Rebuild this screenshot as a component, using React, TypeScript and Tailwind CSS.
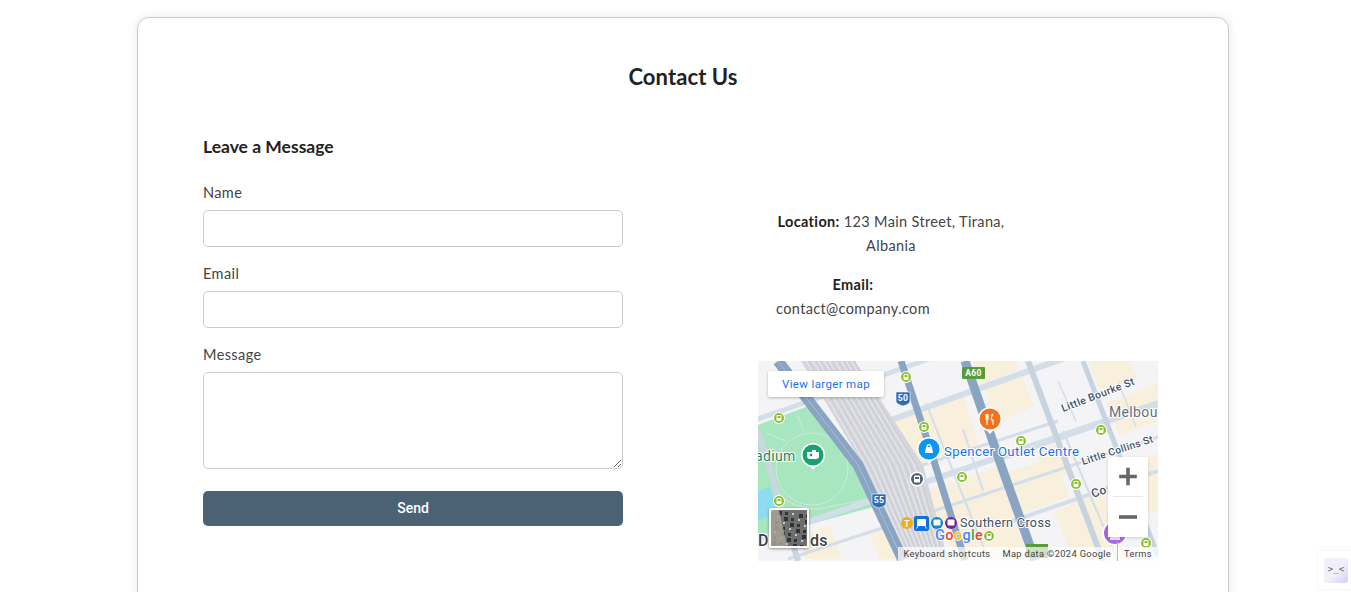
import React from 'react';

const labelFont = { fontFamily: 'Roboto, sans-serif' };

const TransitDot = ({ x, y }: { x: number; y: number }) => (
  <g transform={`translate(${x} ${y})`}>
    <circle r="6" fill="#fff" />
    <circle r="5" fill="#8bc02f" />
    <rect x="-2.5" y="-3" width="5" height="6" rx="1" fill="#fff" />
    <rect x="-1.5" y="-2" width="3" height="2" fill="#8bc02f" />
  </g>
);

const RouteBadge = ({ x, y, label }: { x: number; y: number; label: string }) => (
  <g transform={`translate(${x} ${y})`}>
    <path d="M-7 -6 H7 V3 Q7 6 0 8 Q-7 6 -7 3 Z" fill="#2f6cb5" stroke="#fff" strokeWidth="0.6" />
    <text y="3" textAnchor="middle" fontSize="8.5" fontWeight="700" fill="#fff" style={labelFont}>{label}</text>
  </g>
);

const Pin = ({ x, y, color, children }: { x: number; y: number; color: string; children?: React.ReactNode }) => (
  <g transform={`translate(${x} ${y})`}>
    <path d="M-9 5 L0 15 L9 5 Z" fill="#fff" />
    <circle r="12" fill="#fff" />
    <circle r="10.5" fill={color} />
    {children}
  </g>
);

const railLines = [48, 55, 60, 66, 71, 77, 83, 88, 93];

const MapArt = () => (
  <svg viewBox="0 0 400 200" width="400" height="200" className="block">
    <rect width="400" height="200" fill="#f4f3f5" />
    {/* city blocks */}
    <g fill="#f8f0dc">
      <polygon points="126,62 205,34 222,86 150,112" />
      <polygon points="168,130 240,106 270,198 198,198" />
      <polygon points="225,25 262,10 276,45 240,62" />
      <polygon points="278,90 300,82 312,112 290,120" />
      <polygon points="296,150 345,132 368,198 316,198" />
      <polygon points="248,112 296,96 312,136 264,152" />
      <polygon points="348,42 400,22 400,60 362,74" />
      <polygon points="362,104 400,92 400,150 380,156" />
      <polygon points="40,175 72,165 84,198 48,198" />
      <polygon points="110,170 142,160 155,198 122,198" />
      <polygon points="215,0 260,0 258,10 222,24" />
      <polygon points="330,0 372,0 380,18 342,30" />
    </g>
    <polygon points="0,64 53,44 100,104 115,146 20,172 0,178" fill="#a8e6bf" />
    <polygon points="0,130 12,126 20,150 0,160" fill="#8fdcf0" />
    <g fill="none" stroke="#cfe9d8" strokeWidth="1">
      <circle cx="54" cy="108" r="36" />
      <path d="M8 72 L28 80 M40 55 L46 72 M15 130 Q40 150 60 148 L110 138" />
    </g>
    {/* street grid */}
    <g fill="none" stroke="#d3dee8">
      <path d="M0 58 L120 16 M120 16 L215 -18" strokeWidth="5" />
      <path d="M130 60 L400 -36" strokeWidth="6" />
      <path d="M0 178 L400 42" strokeWidth="6" />
      <path d="M30 198 L400 76" strokeWidth="3" />
      <path d="M115 120 L300 60" strokeWidth="3" />
      <path d="M240 165 L400 110" strokeWidth="4" />
      <path d="M240 100 L400 45" strokeWidth="2" />
      <path d="M270 0 L345 200" strokeWidth="6" stroke="#c7d3de" />
      <path d="M325 0 L400 195" strokeWidth="5" stroke="#c7d3de" />
      <path d="M0 70 L40 200" strokeWidth="6" stroke="#cad6e0" />
      <path d="M205 68 L225 130" strokeWidth="2" />
      <path d="M168 42 L230 198" strokeWidth="2" />
      <path d="M305 70 L360 200" strokeWidth="2" />
      <path d="M300 20 L318 60 M360 20 L378 66" strokeWidth="1.5" />
    </g>
    {/* rail yards */}
    <polygon points="43,0 97,0 165,104 190,199 150,199 105,104" fill="#d6d7dc" />
    <g fill="none" stroke="#f4f4f6" strokeWidth="0.7">
      {railLines.map((x, i) => (
        <path key={x} d={`M${x} 0 L${108 + i * 6} 104 L${152 + i * 4} 199`} />
      ))}
    </g>
    <g fill="none" stroke="#bfc1c8" strokeWidth="0.5">
      {railLines.map((x, i) => (
        <path key={x} d={`M${x + 3} 0 L${111 + i * 6} 104 L${154 + i * 4} 199`} />
      ))}
    </g>
    {/* freeways */}
    <g fill="none" stroke="#8aa5c4" strokeLinejoin="round">
      <path d="M20 0 L100 104 L145 199" strokeWidth="11" />
      <path d="M143 0 L170 81 L207 199" strokeWidth="7" />
      <path d="M207 0 L243 104 L277 199" strokeWidth="9" />
    </g>
    <path d="M20 0 L100 104 L145 199" fill="none" stroke="#a9bdd4" strokeWidth="1" />
    <TransitDot x={148} y={16} />
    <TransitDot x={21} y={57} />
    <TransitDot x={166} y={66} />
    <TransitDot x={263} y={80} />
    <TransitDot x={343} y={69} />
    <TransitDot x={204} y={116} />
    <TransitDot x={318} y={123} />
    <TransitDot x={21} y={140} />
    <TransitDot x={231} y={175} />
    <TransitDot x={388} y={182} />
    <RouteBadge x={145} y={37} label="50" />
    <RouteBadge x={121} y={139} label="55" />
    <rect x="204" y="6" width="23" height="12" rx="1" fill="#5c9a3e" />
    <text x="215.5" y="15" textAnchor="middle" fontSize="8.5" fontWeight="700" fill="#fff" style={labelFont}>A60</text>
    <rect x="268" y="183" width="22" height="14" fill="#5c9a3e" />
    <Pin x={55} y={94} color="#17a26f">
      <path d="M-6 -3 H-1 V-5 H3 V-3 H6 V1 Q6 4 3 4 H-3 Q-6 4 -6 1 Z" fill="#fff" />
      <circle cx="-2" cy="0" r="1.4" fill="#17a26f" />
    </Pin>
    <Pin x={171} y={88} color="#0b96f2">
      <path d="M-4 4 L-3 -2 H3 L4 4 Z" fill="#fff" />
      <path d="M-2 -2 A2 2.4 0 0 1 2 -2" fill="none" stroke="#fff" strokeWidth="1.2" />
    </Pin>
    <Pin x={232} y={58} color="#f4711c">
      <path d="M-4 -5 V-1 Q-4 1 -3 1 V6 M-3 -5 V-1 M-2 -5 V-1 Q-2 1 -3 1 M3 -5 Q1 -3 1.5 1 H3 V6" fill="none" stroke="#fff" strokeWidth="1.2" />
    </Pin>
    <circle cx="357" cy="172" r="13" fill="#fff" />
    <circle cx="357" cy="172" r="11" fill="#a966e8" />
    <rect x="352" y="172" width="10" height="7" fill="#fff" opacity="0.8" />
    <circle cx="159" cy="118" r="7.5" fill="#fff" />
    <circle cx="159" cy="118" r="6" fill="#51667d" />
    <rect x="156" y="114.5" width="6" height="7" rx="1" fill="#fff" />
    <rect x="157" y="116" width="4" height="2" fill="#51667d" />
    {/* station icons */}
    <circle cx="149" cy="162" r="6" fill="#f5ac0f" />
    <text x="149" y="165.5" textAnchor="middle" fontSize="9" fontWeight="700" fill="#fff" style={labelFont}>T</text>
    <rect x="156" y="155" width="15" height="15" rx="2" fill="#0f72d8" />
    <rect x="159" y="158" width="9" height="7" rx="1" fill="#fff" />
    <path d="M160 165 L158.5 167.5 M167 165 L168.5 167.5" stroke="#fff" strokeWidth="1" />
    <circle cx="179" cy="162" r="6" fill="#1382c8" />
    <rect x="175.5" y="158.5" width="7" height="6" rx="1" fill="#fff" />
    <circle cx="193" cy="162" r="6" fill="#7c2290" />
    <rect x="189.5" y="158.5" width="7" height="6" rx="1" fill="#fff" />
    <g style={labelFont}>
      <text x="-3" y="100" fontSize="14" fill="#128a6a" stroke="#fff" strokeWidth="2" paintOrder="stroke">adium</text>
      <text x="186" y="95" fontSize="13.2" fill="#1a73e8" stroke="#fff" strokeWidth="2" paintOrder="stroke">Spencer Outlet Centre</text>
      <text x="202" y="166" fontSize="12.6" fill="#3c4f66" stroke="#fff" strokeWidth="2" paintOrder="stroke">Southern Cross</text>
      <text x="0" y="185" fontSize="16" fontWeight="500" fill="#3c4043" stroke="#fff" strokeWidth="2" paintOrder="stroke">Do</text>
      <text x="52" y="185" fontSize="16" fontWeight="500" fill="#3c4043" stroke="#fff" strokeWidth="2" paintOrder="stroke">ds</text>
      <text x="351" y="56" fontSize="14" fill="#5f6f7f" stroke="#fff" strokeWidth="2" paintOrder="stroke">Melbour</text>
      <text transform="translate(305 51) rotate(-21)" fontSize="10.5" fontWeight="500" fill="#3f5268" stroke="#fff" strokeWidth="2" paintOrder="stroke">Little Bourke St</text>
      <text transform="translate(325 104) rotate(-18)" fontSize="10.2" fontWeight="500" fill="#3f5268" stroke="#fff" strokeWidth="2" paintOrder="stroke">Little Collins St</text>
      <text transform="translate(335 137) rotate(-20)" fontSize="12" fontWeight="500" fill="#3f5268" stroke="#fff" strokeWidth="2" paintOrder="stroke">Co</text>
      <text x="177" y="179" fontSize="14.5" fontWeight="500" stroke="#fff" strokeWidth="1.5" paintOrder="stroke">
        <tspan fill="#4285f4">G</tspan>
        <tspan fill="#ea4335">o</tspan>
        <tspan fill="#fbbc05">o</tspan>
        <tspan fill="#4285f4">g</tspan>
        <tspan fill="#34a853">l</tspan>
        <tspan fill="#ea4335">e</tspan>
      </text>
    </g>
  </svg>
);

// satellite thumbnail, speckled so it reads as aerial imagery
const speckles = Array.from({ length: 70 }, (_, i) => ({
  x: (i * 17) % 36,
  y: (i * 23) % 36,
  w: 2 + (i % 3),
  dark: i % 3 !== 0,
}));

const Thumb = () => (
  <svg viewBox="0 0 36 36" width="36" height="36" className="block">
    <rect width="36" height="36" fill="#6d6f6e" />
    {speckles.map((s, i) => (
      <rect key={i} x={s.x} y={s.y} width={s.w} height={s.w} fill={s.dark ? '#2f3439' : '#c9c9c6'} />
    ))}
    <polygon points="0,0 8,0 16,36 0,36" fill="#a8a398" opacity="0.85" />
  </svg>
);

const GoogleMap = () => (
  <div className="relative w-[400px] h-[200px] overflow-hidden" style={labelFont}>
    <MapArt />
    <a className="absolute left-[10px] top-[10px] w-[116px] h-[26px] flex items-center justify-center bg-white rounded-[2px] shadow-[0_1px_3px_rgba(0,0,0,0.25)] text-[11.5px] text-[#1a73e8]">
      View larger map
    </a>
    <div className="absolute left-[11px] top-[147px] border-2 border-white rounded-[2px] shadow-[0_1px_3px_rgba(0,0,0,0.4)]">
      <Thumb />
    </div>
    <div className="absolute left-[350px] top-[96px] w-[40px] h-[80px] bg-white flex flex-col items-center shadow-[0_1px_3px_rgba(0,0,0,0.15)]">
      <svg viewBox="0 0 40 40" width="40" height="39" className="block">
        <path d="M11 20 H29 M20 11 V29" stroke="#666" strokeWidth="3.6" />
      </svg>
      <div className="w-[30px] h-px bg-[#e6e6e6]" />
      <svg viewBox="0 0 40 40" width="40" height="40" className="block">
        <path d="M11 20 H29" stroke="#666" strokeWidth="3.6" />
      </svg>
    </div>
    <div className="absolute right-0 bottom-0 h-[14px] flex items-center text-[9.3px] text-[#444] bg-white/70 pl-[6px] pr-[6px] whitespace-nowrap">
      <span className="mr-[12px]">Keyboard shortcuts</span>
      <span className="mr-[6px]">Map data ©2024 Google</span>
      <span className="border-l border-[#bbb] pl-[6px]">Terms</span>
    </div>
  </div>
);

const inputClass =
  'block w-full bg-white border border-[#ccc] rounded-[5px] outline-none';

export default function App() {
  return (
    <div className="h-[592px] overflow-hidden bg-white relative font-['Lato',sans-serif] text-[#444]">
      <div className="ml-[137px] mt-[17px] pt-[44px] w-[1092px] h-[640px] bg-white border border-[#ccc] rounded-[12px] shadow-[0_0_10px_rgba(0,0,0,0.1)]">
        <h2 className="text-center text-[22px] leading-[30px] font-bold text-[#222] tracking-[0.1px]">
          Contact Us
        </h2>
        <div className="flex mt-[43px] pl-[65px]">
          <form className="w-[420px] shrink-0">
            <h3 className="text-[17.5px] leading-[24px] font-bold text-[#222]">Leave a Message</h3>
            <label className="block mt-[24px] text-[14.5px] leading-[20px] tracking-[0.4px]">Name</label>
            <input className={`${inputClass} h-[37px] mt-[7px]`} />
            <label className="block mt-[17px] text-[14.5px] leading-[20px] tracking-[0.4px]">Email</label>
            <input className={`${inputClass} h-[37px] mt-[7px]`} />
            <label className="block mt-[17px] text-[14.5px] leading-[20px] tracking-[0.4px]">Message</label>
            <textarea className={`${inputClass} h-[97px] mt-[7px]`} />
            <button
              type="button"
              className="block w-full h-[35px] mt-[22px] bg-[#4b6274] rounded-[5px] text-white text-[14px] font-medium font-['Roboto',sans-serif]"
            >
              Send
            </button>
          </form>
          <div className="ml-[135px] w-[400px] pt-[75px] text-[14.5px] leading-[24px] tracking-[0.35px]">
            <p className="ml-[17px] w-[232px] text-center">
              <strong className="font-bold text-[#222]">Location:</strong> 123 Main Street, Tirana, Albania
            </p>
            <p className="ml-[17px] mt-[15px] w-[156px] text-center">
              <strong className="font-bold text-[#222]">Email:</strong> contact@company.com
            </p>
            <div className="mt-[40px]">
              <GoogleMap />
            </div>
          </div>
        </div>
      </div>
      {/* floating widget */}
      <div className="fixed left-[1316px] top-[550px] w-[40px] h-[40px] bg-white rounded-[6px] border border-[#f6f6f6] flex items-center justify-center">
        <div className="w-[24px] h-[25px] rounded-[3px] bg-[linear-gradient(135deg,#f1effa_55%,#d9c8f4)] flex items-center justify-center text-[9px] text-[#666] font-['DejaVu_Sans_Mono',monospace]">
          &gt;_&lt;
        </div>
      </div>
    </div>
  );
}
